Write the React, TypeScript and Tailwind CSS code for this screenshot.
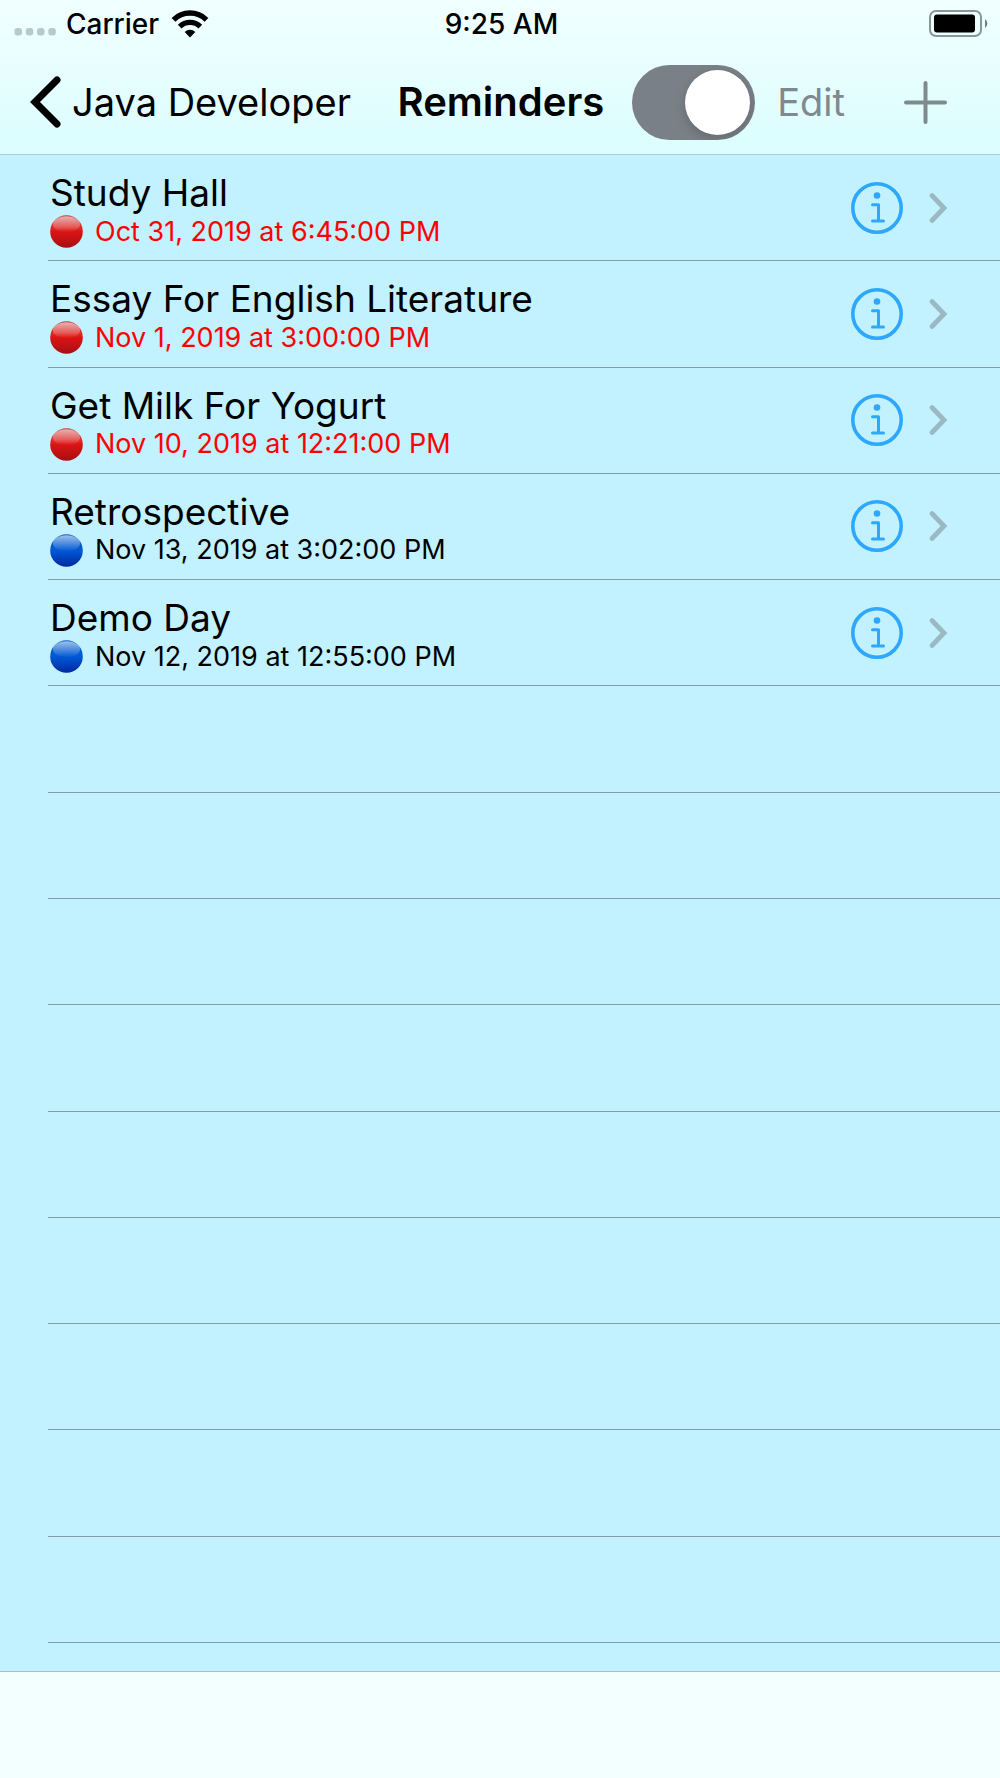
import { useState } from "react";

type Reminder = { id: number; title: string; due: string; overdue: boolean };

const reminders: Reminder[] = [
    { id: 1, title: "Study Hall", due: "Oct 31, 2019 at 6:45:00 PM", overdue: true },
    { id: 2, title: "Essay For English Literature", due: "Nov 1, 2019 at 3:00:00 PM", overdue: true },
    { id: 3, title: "Get Milk For Yogurt", due: "Nov 10, 2019 at 12:21:00 PM", overdue: true },
    { id: 4, title: "Retrospective", due: "Nov 13, 2019 at 3:02:00 PM", overdue: false },
    { id: 5, title: "Demo Day", due: "Nov 12, 2019 at 12:55:00 PM", overdue: false },
];

const TOTAL_ROWS = 14;

function WifiIcon() {
    return (
        <svg width="38" height="28" viewBox="0 0 38 28" fill="none" aria-hidden="true">
            <path d="M2.5 9.8 A23.5 23.5 0 0 1 35.5 9.8" stroke="black" strokeWidth="5.4" />
            <path d="M8.7 16.6 A14.6 14.6 0 0 1 29.3 16.6" stroke="black" strokeWidth="5.2" />
            <path d="M13.7 22 A7.5 7.5 0 0 1 24.3 22 L19 27.4 Z" fill="black" />
        </svg>
    );
}

function BatteryIcon() {
    return (
        <svg width="60" height="28" viewBox="0 0 60 28" aria-hidden="true">
            <rect x="1" y="1" width="51" height="25" rx="6" fill="none" stroke="#879896" strokeWidth="2" />
            <rect x="5" y="4.5" width="41" height="18" rx="3" fill="black" />
            <path d="M56 9 A5.5 5.5 0 0 1 56 18 Z" fill="#6f8281" />
        </svg>
    );
}

function InfoIcon() {
    return (
        <svg width="52" height="52" viewBox="0 0 52 52" fill="none" stroke="#2ea8ff" aria-hidden="true">
            <circle cx="26" cy="26" r="24.2" strokeWidth="3.6" />
            <circle cx="26" cy="13.5" r="3.3" fill="#2ea8ff" stroke="none" />
            <path d="M21.5 22.7 H27.5 V38.7 M21.5 38.9 H32.5" strokeWidth="3" strokeLinecap="round" strokeLinejoin="round" />
        </svg>
    );
}

// glossy ball, red for overdue and blue for upcoming
function StatusBall({ overdue }: { overdue: boolean }) {
    const fill = overdue ? "redBall" : "blueBall";
    return (
        <svg className="shrink-0" width="33" height="33" viewBox="0 0 33 33" aria-hidden="true">
            <defs>
                <linearGradient id="redBall" x1="0" y1="0" x2="0" y2="1">
                    <stop offset="0" stopColor="#c93a3c" />
                    <stop offset="0.35" stopColor="#e0302c" />
                    <stop offset="0.5" stopColor="#dc1414" />
                    <stop offset="1" stopColor="#a60f12" />
                </linearGradient>
                <linearGradient id="blueBall" x1="0" y1="0" x2="0" y2="1">
                    <stop offset="0" stopColor="#0a63cc" />
                    <stop offset="0.5" stopColor="#0058d6" />
                    <stop offset="1" stopColor="#0028a0" />
                </linearGradient>
                <linearGradient id="gloss" x1="0" y1="0" x2="0" y2="1">
                    <stop offset="0" stopColor="white" stopOpacity="0.6" />
                    <stop offset="1" stopColor="white" stopOpacity="0" />
                </linearGradient>
            </defs>
            <circle cx="16.5" cy="16.5" r="16.3" fill={`url(#${fill})`} />
            <ellipse cx="16.5" cy="9.3" rx="13.6" ry="8" fill="url(#gloss)" />
        </svg>
    );
}

function ReminderRow({ reminder }: { reminder: Reminder }) {
    return (
        <li className="flex items-center border-b border-[#7f9ea7] pr-[52px]">
            <div className="min-w-0 flex-1 pt-1 pl-0.5">
                <p className="truncate text-[37px] leading-11">{reminder.title}</p>
                <p className={`flex items-center gap-3 text-[27px] leading-8 ${reminder.overdue ? "text-[#ff0000]" : "text-black"}`}>
                    <StatusBall overdue={reminder.overdue} />
                    {reminder.due}
                </p>
            </div>
            <button type="button" aria-label={`Details for ${reminder.title}`} className="shrink-0">
                <InfoIcon />
            </button>
            <svg className="ml-[25px] shrink-0" width="20" height="32" viewBox="0 0 20 32" fill="none" aria-hidden="true">
                <path d="M4 3.5 L16 16 L4 28.5" stroke="#9ab9c2" strokeWidth="4.8" strokeLinecap="round" />
            </svg>
        </li>
    );
}

export default function App() {
    const [enabled, setEnabled] = useState(true);
    const emptyRows = Array.from({ length: TOTAL_ROWS - reminders.length });

    return (
        <div className="flex min-h-screen flex-col bg-[#c2f1ff] font-['Inter',sans-serif] text-black">
            <header className="border-b border-[#a9cdd2] bg-linear-to-b from-[#f1ffff] to-[#dbfdff]">
                {/* Status bar */}
                <div className="grid h-12 grid-cols-[1fr_auto_1fr] items-center pr-[11px] pl-[14px] text-[28px]">
                    <div className="flex items-center">
                        <svg width="42" height="8" viewBox="0 0 42 8" fill="#b5cbca" className="mt-4 mr-2.5" aria-hidden="true">
                            <rect x="0.5" width="7.5" height="7.5" rx="3" />
                            <rect x="11.8" width="7.5" height="7.5" rx="3" />
                            <rect x="23" width="7.5" height="7.5" rx="3" />
                            <rect x="34.3" width="7.5" height="7.5" rx="3" />
                        </svg>
                        <span className="mr-3 font-medium">Carrier</span>
                        <WifiIcon />
                    </div>
                    <span className="font-medium">9:25 AM</span>
                    <div className="flex justify-end">
                        <BatteryIcon />
                    </div>
                </div>

                {/* Navigation bar */}
                <nav className="flex h-[106px] items-center pt-0.5 pr-[53px] pl-[30px] text-[38px]">
                    <a href="#" className="flex items-center gap-2.5 whitespace-nowrap">
                        <svg width="32" height="52" viewBox="0 0 32 52" fill="none" className="shrink-0" aria-hidden="true">
                            <path d="M27 4 L5 26 L27 48" stroke="black" strokeWidth="7" strokeLinecap="round" />
                        </svg>
                        Java Developer
                    </a>
                    <h1 className="mr-7 ml-auto text-[40px] font-semibold">Reminders</h1>
                    <div className="flex items-center">
                        <label className="relative mr-[22px] h-[75px] w-[123px] shrink-0 cursor-pointer overflow-hidden rounded-full bg-[#798087]">
                            <input
                                type="checkbox"
                                aria-label="Reminders enabled"
                                className="peer sr-only"
                                checked={enabled}
                                onChange={(e) => setEnabled(e.target.checked)}
                            />
                            <span className="absolute top-[5px] left-[5px] size-[65px] rounded-full bg-white shadow-[0_4px_12px_rgba(0,0,0,0.18)] peer-checked:left-[53px]" />
                        </label>
                        <button type="button" className="text-[#7f8a90]">Edit</button>
                        <button type="button" aria-label="Add reminder" className="ml-[59px]">
                            <svg width="43" height="43" viewBox="0 0 43 43" aria-hidden="true">
                                <path d="M21.5 2 V41 M2 21.5 H41" stroke="#7f8a90" strokeWidth="4" strokeLinecap="round" />
                            </svg>
                        </button>
                    </div>
                </nav>
            </header>

            {/* Reminder list */}
            <main className="flex flex-1 flex-col pb-7 pl-12">
                <ul className="grid flex-1 auto-rows-fr">
                    {reminders.map((reminder) => (
                        <ReminderRow key={reminder.id} reminder={reminder} />
                    ))}
                    {emptyRows.map((_, i) => (
                        <li key={i} aria-hidden="true" className="border-b border-[#7f9ea7]" />
                    ))}
                </ul>
            </main>

            {/* Bottom toolbar */}
            <footer className="h-[107px] border-t border-[#a5bfc6] bg-[#f3feff]" />
        </div>
    );
}
